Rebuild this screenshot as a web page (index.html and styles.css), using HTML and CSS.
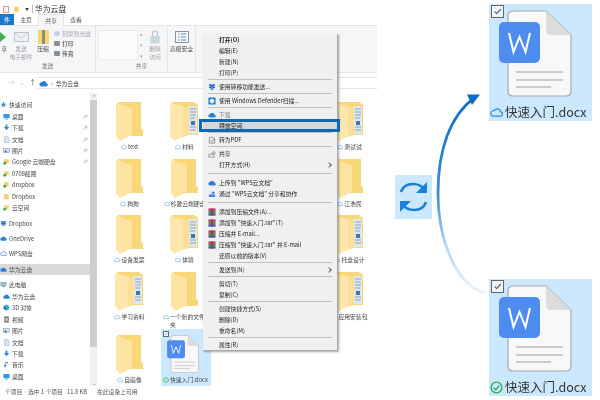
FILE: index.html
```html
<!DOCTYPE html>
<html lang="zh-CN">
<head>
    <meta charset="UTF-8">
    <title>华为云盘</title>
    <link rel="stylesheet" href="styles.css">
</head>
<body>

<!-- shared icons -->
<svg class="defs" aria-hidden="true">
    <symbol id="cloud" viewBox="0 0 14 10"><path d="M3.5 9H11a2.3 2.3 0 0 0 .4-4.6A3.6 3.6 0 0 0 4.6 3 3 3 0 0 0 3.5 9Z" fill="none" stroke="currentColor" stroke-width="1.3"/></symbol>
    <symbol id="cloud-solid" viewBox="0 0 14 10"><path d="M3.5 9.5H11a2.5 2.5 0 0 0 .4-5A3.8 3.8 0 0 0 4.4 3 3.2 3.2 0 0 0 3.5 9.5Z" fill="currentColor"/></symbol>
    <symbol id="folder" viewBox="0 0 27 39">
        <path d="M2 0H25V27L27 28V34H9Z" fill="#f8d778"/>
        <path d="M0 1L16 6V33L4 39L0 34Z" fill="#fde4a2"/>
    </symbol>
    <symbol id="folder-full" viewBox="0 0 30 39">
        <path d="M2 0H24L28 3V33H10Z" fill="#f8d778"/>
        <path d="M18 4H27V32H18Z" fill="#dfe7ec"/>
        <path d="M20 7H26M20 10H26M20 13H26M20 16H25M20 25H26M20 28H26" stroke="#8fa3b0" stroke-width="1"/>
        <path d="M21 19H25V23H21Z" fill="#3a78b0"/>
        <path d="M6 2L19 6V33L9 36Z" fill="#fbdf96"/>
        <path d="M0 1L13 5V34L4 39L0 34Z" fill="#fde7ad"/>
    </symbol>
    <symbol id="doc" viewBox="0 0 73 87">
        <path d="M14 1H47L72 25V81Q72 86 67 86H14Q9 86 9 81V6Q9 1 14 1Z" fill="#f8f8f8" stroke="#a8a8a8" stroke-width="1.2"/>
        <path d="M47 1L72 25H52Q47 25 47 20Z" fill="#dcdcdc"/>
        <path d="M17 62H64M17 70H64M17 77H52" stroke="#bcbcbc" stroke-width="1.6"/>
        <rect x="0" y="12" width="41" height="41" rx="5" fill="#4f8cf0"/>
        <path d="M10 23L14.5 42L20.5 27L26.5 42L31 23" fill="none" stroke="#fff" stroke-width="2"/>
    </symbol>
    <symbol id="check" viewBox="0 0 14 14"><circle cx="7" cy="7" r="5.8" fill="none" stroke="#2fa84f" stroke-width="1.4"/><path d="M4 7.2L6.2 9.4L10 5" fill="none" stroke="#2fa84f" stroke-width="1.4"/></symbol>
    <symbol id="tick" viewBox="0 0 13 13"><path d="M3 6.5L5.5 9L10.5 3.8" fill="none" stroke="#444" stroke-width="1.2"/></symbol>
    <symbol id="pin" viewBox="0 0 8 8"><path d="M1 7L3.5 4.5M2.5 2.5L5.5 5.5M3.5 2.5L5 1L7 3L5.5 4.5" fill="none" stroke="#888" stroke-width="1"/></symbol>
    <symbol id="star" viewBox="0 0 8 8"><path d="M4 0.5L5 3H7.6L5.5 4.7L6.3 7.4L4 5.8L1.7 7.4L2.5 4.7L0.4 3H3Z" fill="#3b8ed8"/></symbol>
    <symbol id="desk" viewBox="0 0 8 8"><rect x="0.5" y="1" width="7" height="5" rx="0.5" fill="#2f9be6"/><rect x="2.5" y="6.5" width="3" height="1" fill="#2f9be6"/></symbol>
    <symbol id="down" viewBox="0 0 8 8"><path d="M3 0.5H5V3.5H7L4 7L1 3.5H3Z" fill="#2f86d8"/></symbol>
    <symbol id="page" viewBox="0 0 8 8"><path d="M1.5 0.5H5L6.8 2.3V7.5H1.5Z" fill="#d6e4ef" stroke="#8fa9bd" stroke-width="0.5"/></symbol>
    <symbol id="pic" viewBox="0 0 8 8"><rect x="0.5" y="1.5" width="7" height="5" fill="#cfe3f2" stroke="#6d8ba3" stroke-width="0.5"/><path d="M1 6L3 3.5L5 6Z" fill="#4f7591"/></symbol>
    <symbol id="sync" viewBox="0 0 8 8"><path d="M1.5 1H3.5L4.3 1.8H6.5V6H1.5Z" fill="#f4cf6a"/><circle cx="2" cy="6" r="1.7" fill="#3fae4a"/></symbol>
    <symbol id="plain" viewBox="0 0 8 8"><path d="M1.5 1H3.5L4.3 1.8H6.5V7H1.5Z" fill="#f4cf6a"/></symbol>
    <symbol id="box" viewBox="0 0 8 8"><path d="M0.5 2L2.3 0.8L4 2L5.7 0.8L7.5 2L5.7 3.2L7.5 4.4L5.7 5.6L4 4.4L2.3 5.6L0.5 4.4L2.3 3.2ZM2.3 6L4 4.9L5.7 6L4 7.2Z" fill="#2f6fd8"/></symbol>
    <symbol id="pc" viewBox="0 0 8 8"><rect x="1" y="1.5" width="6" height="4" fill="#9ec3de" stroke="#607f96" stroke-width="0.5"/><rect x="2.5" y="6" width="3" height="1" fill="#607f96"/></symbol>
    <symbol id="cube" viewBox="0 0 8 8"><path d="M4 0.5L7.2 2.2V5.8L4 7.5L0.8 5.8V2.2Z" fill="#35b4cf"/><path d="M4 4V7.5L0.8 5.8V2.2Z" fill="#1d7f99"/></symbol>
    <symbol id="film" viewBox="0 0 8 8"><rect x="1.5" y="0.5" width="5" height="7" fill="#5d6b78"/><rect x="2.5" y="2" width="3" height="4" fill="#b9c6d0"/></symbol>
    <symbol id="note" viewBox="0 0 8 8"><path d="M3.5 1V5.6A1.3 1.1 0 1 1 2.8 4.6V1H5.6V2.2H3.5Z" fill="#2f86d8"/></symbol>
    <symbol id="rar" viewBox="0 0 9 9">
        <rect x="0.5" y="0.5" width="8" height="2.7" fill="#b23a7c"/>
        <rect x="0.5" y="3.2" width="8" height="2.7" fill="#3f9b46"/>
        <rect x="0.5" y="5.9" width="8" height="2.7" fill="#2d5fb8"/>
        <rect x="3.5" y="0.5" width="2" height="8" fill="#b6352c"/>
    </symbol>
</svg>

<div class="page">

    <div class="explorer">
        <div class="titlebar">
            <span class="qa qa-check"></span>
            <svg class="qa-folder"><use href="#plain"/></svg>
            <span class="qa-drop"></span>
            <span class="qa-sep"></span>
            <span class="title">华为云盘</span>
        </div>

        <div class="tabs">
            <span class="tab tab-file">件</span>
            <span class="tab">主页</span>
            <span class="tab tab-on">共享</span>
            <span class="tab">查看</span>
        </div>

        <div class="ribbon">
            <div class="group group-send">
                <div class="tools">
                    <div class="rbtn rbtn-cut">
                        <svg class="ic-share" viewBox="0 0 10 12"><path d="M0 4H3V1L9 6L3 11V8H0Z" fill="#3fb24a"/></svg>
                        <span>享</span>
                    </div>
                    <div class="rbtn rbtn-mail off">
                        <svg class="ic-mail" viewBox="0 0 15 10"><rect x="0.5" y="0.5" width="14" height="9" fill="#eef2f6" stroke="#bcc6cf"/><path d="M1 1L7.5 6L14 1" fill="none" stroke="#c8d0d8"/></svg>
                        <span>发送</span><span>电子邮件</span>
                    </div>
                    <div class="rbtn rbtn-zip">
                        <svg class="ic-zip" viewBox="0 0 11 14"><rect width="11" height="14" fill="#f6d66f"/><rect x="4" width="3" height="14" fill="#8d8d7a"/></svg>
                        <span>压缩</span>
                    </div>
                    <div class="rlist">
                        <span class="off"><i class="dot dot-disc"></i>刻录到光盘</span>
                        <span><i class="dot dot-print"></i>打印</span>
                        <span><i class="dot dot-print"></i>传真</span>
                    </div>
                </div>
                <div class="cap">发送</div>
            </div>
            <div class="group group-share">
                <div class="tools">
                    <div class="sharebox"></div>
                    <div class="sharearrows">
                        <span>▴</span><span>▾</span><span>▾</span>
                    </div>
                    <div class="rbtn rbtn-lock off">
                        <svg class="ic-lock" viewBox="0 0 10 14"><path d="M2.5 6V3.5a2.5 2.5 0 0 1 5 0V6" fill="none" stroke="#b9c3cc" stroke-width="1.2"/><rect x="0.5" y="6" width="9" height="7.5" fill="#c9d5df"/></svg>
                        <span>删除</span><span>访问</span>
                    </div>
                </div>
                <div class="cap cap-right">共享</div>
            </div>
            <div class="group group-sec">
                <div class="tools">
                    <div class="rbtn rbtn-sec">
                        <svg class="ic-sec" viewBox="0 0 14 12"><rect x="0.5" y="0.5" width="13" height="11" fill="#f7f8f9" stroke="#8b949c"/><path d="M3 3H4.5M3 6H4.5M3 9H4.5M6 3H11M6 6H11M6 9H11" stroke="#5a8fc0"/></svg>
                        <span>高级安全</span>
                    </div>
                </div>
            </div>
        </div>

        <div class="addr">
            <div class="nav">
                <span class="nav-off">→</span>
                <span class="nav-off nav-v">⌄</span>
                <span>↑</span>
            </div>
            <div class="addrbox">
                <svg class="ic-addr"><use href="#cloud-solid"/></svg>
                <span class="crumb">›</span>
                <span>华为云盘</span>
            </div>
        </div>

        <div class="main">
            <nav class="tree">
                <div class="row root"><svg><use href="#star"/></svg><span>快速访问</span></div>
                <div class="row"><svg><use href="#desk"/></svg><span>桌面</span><svg class="pin"><use href="#pin"/></svg></div>
                <div class="row"><svg><use href="#down"/></svg><span>下载</span><svg class="pin"><use href="#pin"/></svg></div>
                <div class="row"><svg><use href="#page"/></svg><span>文档</span><svg class="pin"><use href="#pin"/></svg></div>
                <div class="row"><svg><use href="#pic"/></svg><span>图片</span><svg class="pin"><use href="#pin"/></svg></div>
                <div class="row"><svg><use href="#sync"/></svg><span>Google 云端硬盘</span><svg class="pin"><use href="#pin"/></svg></div>
                <div class="row"><svg><use href="#sync"/></svg><span>0708截图</span></div>
                <div class="row"><svg><use href="#sync"/></svg><span>dropbox</span></div>
                <div class="row"><svg><use href="#plain"/></svg><span>Dropbox</span></div>
                <div class="row"><svg><use href="#sync"/></svg><span>云空间</span></div>
                <div class="row root"><svg><use href="#box"/></svg><span>Dropbox</span></div>
                <div class="row root"><svg class="blue"><use href="#cloud-solid"/></svg><span>OneDrive</span></div>
                <div class="row root"><svg class="blue"><use href="#cloud"/></svg><span>WPS网盘</span></div>
                <div class="row root row-on"><svg class="blue"><use href="#cloud-solid"/></svg><span>华为云盘</span></div>
                <div class="row root"><svg><use href="#pc"/></svg><span>此电脑</span></div>
                <div class="row"><svg class="blue"><use href="#cloud-solid"/></svg><span>华为云盘</span></div>
                <div class="row"><svg><use href="#cube"/></svg><span>3D 对象</span></div>
                <div class="row"><svg><use href="#film"/></svg><span>视频</span></div>
                <div class="row"><svg><use href="#pic"/></svg><span>图片</span></div>
                <div class="row"><svg><use href="#page"/></svg><span>文档</span></div>
                <div class="row"><svg><use href="#down"/></svg><span>下载</span></div>
                <div class="row"><svg><use href="#note"/></svg><span>音乐</span></div>
                <div class="row"><svg><use href="#desk"/></svg><span>桌面</span></div>
            </nav>

            <div class="scroll">
                <span class="scroll-arrow">⌃</span>
                <span class="thumb"></span>
                <span class="scroll-arrow">⌄</span>
            </div>

            <div class="files">
                <div class="item"><svg class="fd"><use href="#folder"/></svg><div class="name"><svg class="cl"><use href="#cloud"/></svg><span>text</span></div></div>
                <div class="item"><svg class="fd fd-full"><use href="#folder-full"/></svg><div class="name"><svg class="cl"><use href="#cloud"/></svg><span>材料</span></div></div>
                <div class="item col5"><svg class="fd fd-full"><use href="#folder-full"/></svg><div class="name"><svg class="cl"><use href="#cloud"/></svg><span>测试试</span></div></div>

                <div class="item"><svg class="fd"><use href="#folder"/></svg><div class="name"><svg class="cl"><use href="#cloud"/></svg><span>狗狗</span></div></div>
                <div class="item"><svg class="fd"><use href="#folder"/></svg><div class="name"><svg class="cl"><use href="#cloud"/></svg><span>谷歌云端硬盘</span></div></div>
                <div class="item col5"><svg class="fd"><use href="#folder"/></svg><div class="name"><svg class="cl"><use href="#cloud"/></svg><span>江浩民</span></div></div>

                <div class="item"><svg class="fd"><use href="#folder"/></svg><div class="name"><svg class="cl"><use href="#cloud"/></svg><span>设备发票</span></div></div>
                <div class="item"><svg class="fd fd-full"><use href="#folder-full"/></svg><div class="name"><svg class="cl"><use href="#cloud"/></svg><span>体验</span></div></div>
                <div class="item col5"><svg class="fd fd-full"><use href="#folder-full"/></svg><div class="name"><svg class="cl"><use href="#cloud"/></svg><span>托盘设计</span></div></div>

                <div class="item"><svg class="fd fd-full"><use href="#folder-full"/></svg><div class="name"><svg class="cl"><use href="#cloud"/></svg><span>学习资料</span></div></div>
                <div class="item"><svg class="fd"><use href="#folder"/></svg><div class="name name-wrap"><svg class="cl"><use href="#cloud"/></svg><span>一个新的文件夹</span></div></div>
                <div class="item col5"><svg class="fd fd-full"><use href="#folder-full"/></svg><div class="name"><svg class="cl"><use href="#cloud"/></svg><span>应用安装包</span></div></div>

                <div class="item"><svg class="fd"><use href="#folder"/></svg><div class="name"><svg class="cl"><use href="#cloud"/></svg><span>自画像</span></div></div>
                <div class="item item-sel">
                    <span class="box box-sm"><svg><use href="#tick"/></svg></span>
                    <svg class="doc-sm"><use href="#doc"/></svg>
                    <div class="name name-sel"><svg class="cl"><use href="#check"/></svg><span>快速入门.docx</span></div>
                </div>
            </div>
        </div>

        <div class="status">
            <span class="st-count">个项目</span>
            <span class="st-sel">选中 1 个项目</span>
            <span class="st-size">11.8 KB</span>
            <span class="st-avail">在此设备上可用</span>
        </div>

        <!-- context menu -->
        <div class="menu">
            <div class="mi mi-bold"><span>打开(O)</span></div>
            <div class="mi"><span>编辑(E)</span></div>
            <div class="mi"><span>新建(N)</span></div>
            <div class="mi"><span>打印(P)</span></div>
            <hr>
            <div class="mi"><svg><use href="#box"/></svg><span>使用转移功能发送...</span></div>
            <hr>
            <div class="mi"><svg class="ic-def" viewBox="0 0 9 9"><rect x="0.5" y="0.5" width="8" height="8" rx="1" fill="#1f7fd0"/><path d="M4.5 2L7 3V5Q7 6.5 4.5 7.5Q2 6.5 2 5V3Z" fill="#dcefff"/></svg><span>使用 Windows Defender扫描...</span></div>
            <hr>
            <div class="mi mi-off"><svg class="blue"><use href="#cloud-solid"/></svg><span>下载</span></div>
            <div class="mi mi-hot"><span>释放空间</span></div>
            <hr>
            <div class="mi"><svg viewBox="0 0 9 9"><path d="M1.5 1.5H5.5L7.5 3.5V8H1.5Z" fill="none" stroke="#777" stroke-width="0.8"/><path d="M3 5L4.3 6.3L7.5 2.5" fill="none" stroke="#555" stroke-width="0.8"/></svg><span>转为PDF</span></div>
            <hr>
            <div class="mi"><svg viewBox="0 0 9 9"><path d="M1 4V8H7V6M3 5.5Q3.5 3 6 3V1.5L8.5 3.5L6 5.5V4.2Q4.2 4.2 3 5.5Z" fill="none" stroke="#666" stroke-width="0.7"/></svg><span>共享</span></div>
            <div class="mi"><span>打开方式(H)</span><b class="more"></b></div>
            <hr class="hr-wide">
            <div class="mi"><svg class="blue"><use href="#cloud-solid"/></svg><span>上传到 "WPS云文档"</span></div>
            <div class="mi"><svg viewBox="0 0 9 9"><path d="M1 8H8V5H1ZM3 4Q3.5 2.5 5.5 2.5V1L8 3L5.5 5V3.8Q4 3.8 3 4Z" fill="#3d86dc"/></svg><span>通过 "WPS云文档" 分享和协作</span></div>
            <hr class="hr-wide">
            <div class="mi"><svg><use href="#rar"/></svg><span>添加到压缩文件(A)...</span></div>
            <div class="mi"><svg><use href="#rar"/></svg><span>添加到 "快速入门.rar"(T)</span></div>
            <div class="mi"><svg><use href="#rar"/></svg><span>压缩并 E-mail...</span></div>
            <div class="mi"><svg><use href="#rar"/></svg><span>压缩到 "快速入门.rar" 并 E-mail</span></div>
            <div class="mi"><span>还原以前的版本(V)</span></div>
            <hr>
            <div class="mi"><span>发送到(N)</span><b class="more"></b></div>
            <hr>
            <div class="mi"><span>剪切(T)</span></div>
            <div class="mi"><span>复制(C)</span></div>
            <hr>
            <div class="mi"><span>创建快捷方式(S)</span></div>
            <div class="mi"><span>删除(D)</span></div>
            <div class="mi"><span>重命名(M)</span></div>
            <hr>
            <div class="mi"><span>属性(R)</span></div>
        </div>
    </div>

    <div class="right">
        <div class="refresh">
            <svg viewBox="0 0 37 44">
                <path d="M6 17C8 11 13 9 18 9C23 9 27 11 30 15" fill="none" stroke="#1a80dc" stroke-width="2.6"/>
                <path d="M32 7V18H21Z" fill="#1a80dc"/>
                <path d="M31 27C29 33 24 35 19 35C14 35 10 33 7 29" fill="none" stroke="#1a80dc" stroke-width="2.6"/>
                <path d="M5 37V26H16Z" fill="#1a80dc"/>
            </svg>
        </div>
        <div class="tiles">
            <div class="tile">
                <span class="box"><svg><use href="#tick"/></svg></span>
                <svg class="doc"><use href="#doc"/></svg>
                <div class="tile-name"><svg class="tile-cloud"><use href="#cloud"/></svg><span>快速入门.docx</span></div>
            </div>
            <div class="tile">
                <span class="box"><svg><use href="#tick"/></svg></span>
                <svg class="doc"><use href="#doc"/></svg>
                <div class="tile-name"><svg class="tile-ok"><use href="#check"/></svg><span>快速入门.docx</span></div>
            </div>
        </div>
    </div>

    <!-- curved arrow between the two states -->
    <svg class="curve" viewBox="0 0 600 400">
        <defs>
            <linearGradient id="fade" gradientUnits="userSpaceOnUse" x1="0" y1="95" x2="0" y2="295">
                <stop offset="0" stop-color="#0a6cc2"/>
                <stop offset="0.5" stop-color="#3c8fd8"/>
                <stop offset="0.75" stop-color="#b5d5f1"/>
                <stop offset="1" stop-color="#edf5fc"/>
            </linearGradient>
        </defs>
        <path d="M485 293C456 285 438 240 438 193C438 150 450 116 474 98" fill="none" stroke="url(#fade)" stroke-width="2.8"/>
        <path d="M467 94.500L480 94.500L472 105Z" fill="#0a6cc2"/>
    </svg>
</div>

</body>
</html>
```

FILE: styles.css
```css
* {
    margin: 0;
    padding: 0;
    box-sizing: border-box;
}

body {
    background: #fff;
    font-family: "Noto Sans CJK SC", "Liberation Sans", sans-serif;
    font-size: 5.8px;
    color: #333;
    overflow: hidden;
}

.defs {
    display: none;
}

.page {
    position: relative;
    display: flex;
    width: 600px;
    height: 400px;
    overflow: hidden;
    filter: blur(0.45px);
}

/* window */
.explorer {
    position: relative;
    display: flex;
    flex-direction: column;
    width: 377px;
    height: 400px;
}

.titlebar {
    display: flex;
    align-items: center;
    height: 14px;
    padding: 4px 0 0 3px;
}

.qa-check {
    width: 6px;
    height: 7px;
    border: 1px solid #d99;
    background: #f6f6f6;
}

.qa-folder {
    width: 7px;
    height: 8px;
    margin-left: 4px;
}

.qa-drop {
    width: 0;
    height: 0;
    margin-left: 5px;
    border: 2px solid transparent;
    border-top: 3px solid #444;
    border-bottom: 0;
}

.qa-sep {
    width: 1px;
    height: 8px;
    margin-left: 3px;
    background: #bbb;
}

.title {
    margin-left: 2px;
    font-size: 7.8px;
    line-height: 10px;
}

.tabs {
    display: flex;
    height: 12px;
    border-bottom: 1px solid #e4e4e4;
}

.tab {
    width: 24px;
    height: 12px;
    line-height: 11px;
    text-align: center;
    color: #555;
}

.tab-file {
    width: 14px;
    height: 11px;
    background: #1979ca;
    color: #fff;
}

.tab-on {
    width: 26px;
    background: #f5f6f7;
    border: 1px solid #e4e4e4;
    border-bottom: 0;
}

.ribbon {
    display: flex;
    height: 47px;
    background: #f5f6f7;
    border-bottom: 1px solid #e8e8e8;
}

.group {
    display: flex;
    flex-direction: column;
    border-right: 1px solid #e3e4e6;
}

.group-send {
    width: 96px;
}

.group-share {
    width: 72px;
}

.group-sec {
    width: 28px;
}

.tools {
    display: flex;
    flex: 1;
    min-height: 0;
    padding-top: 4px;
}

.cap {
    height: 10px;
    padding-bottom: 2px;
    line-height: 8px;
    text-align: center;
    color: #777;
}

.cap-right {
    padding-left: 20px;
}

.rbtn {
    display: flex;
    flex-direction: column;
    align-items: center;
    line-height: 8px;
    white-space: nowrap;
    color: #444;
}

.rbtn svg {
    flex: none;
    height: 14px;
    margin-bottom: 1px;
}

.off,
.rbtn.off {
    color: #a0a4a8;
}

.rbtn-cut {
    align-items: flex-end;
    width: 7px;
    overflow: hidden;
}

.ic-share {
    width: 10px;
}

.rbtn-mail {
    width: 22px;
    margin-left: 3px;
}

.ic-mail {
    width: 15px;
}

.rbtn-zip {
    width: 12px;
    margin-left: 5px;
}

.ic-zip {
    width: 11px;
}

.rlist {
    display: flex;
    flex-direction: column;
    gap: 2px;
    margin-left: 5px;
    line-height: 8px;
    white-space: nowrap;
}

.dot {
    display: inline-block;
    width: 6px;
    height: 5px;
    margin-right: 2px;
    background: #8a8f94;
    border-radius: 1px;
}

.dot-disc {
    background: #c2d3e2;
    border-radius: 50%;
}

.sharebox {
    width: 40px;
    height: 30px;
    margin-left: 2px;
    background: #fbfcfd;
    border: 1px solid #eaecee;
}

.sharearrows {
    display: flex;
    flex-direction: column;
    justify-content: space-between;
    height: 30px;
    margin-left: 2px;
    font-size: 5px;
    line-height: 8px;
    color: #aaa;
}

.rbtn-lock {
    width: 14px;
    margin-left: 5px;
}

.ic-lock {
    width: 10px;
}

.rbtn-sec {
    width: 28px;
}

.ic-sec {
    width: 14px;
}

.addr {
    display: flex;
    height: 20px;
    padding-top: 4px;
}

.nav {
    display: flex;
    gap: 4px;
    width: 37px;
    padding-left: 8px;
    font-size: 7px;
    line-height: 10px;
    color: #555;
}

.nav-off {
    color: #c4c4c4;
}

.addrbox {
    display: flex;
    flex: 1;
    align-items: center;
    gap: 3px;
    height: 12px;
    padding-left: 2px;
    border-top: 1px solid #e6e6e6;
    border-bottom: 1px solid #e6e6e6;
}

.ic-addr {
    width: 9px;
    height: 7px;
    color: #2a7fd8;
}

.crumb {
    color: #666;
}

.main {
    display: flex;
    height: 293px;
}

/* folder tree */
.tree {
    width: 93px;
    padding-top: 2px;
    overflow: hidden;
}

.row {
    display: flex;
    align-items: center;
    gap: 2px;
    height: 11.45px;
    padding-left: 3px;
    white-space: nowrap;
    color: #444;
}

.row svg {
    flex: none;
    width: 7px;
    height: 7px;
}

.root {
    margin-top: 4px;
    padding-left: 0;
}

.row-on {
    background: #d9d9d9;
}

.blue {
    color: #2a7fd8;
}

.row .pin {
    width: 5px;
    height: 5px;
    margin-left: auto;
    margin-right: 2px;
}

.scroll {
    display: flex;
    flex-direction: column;
    align-items: center;
    justify-content: space-between;
    width: 7px;
    background: #f0f0f0;
    font-size: 5px;
    line-height: 7px;
    color: #666;
}

.thumb {
    flex: 1;
    align-self: stretch;
    margin-bottom: 32px;
    background: #cdcdcd;
}

/* file grid */
.files {
    display: grid;
    grid-template-columns: repeat(5, 55px);
    grid-auto-rows: minmax(56.7px, auto);
    align-content: start;
    padding: 3px 0 0 5px;
}

.item {
    display: flex;
    flex-direction: column;
    align-items: center;
    padding-top: 6px;
    white-space: nowrap;
}

.col5 {
    grid-column: 5;
}

.item:nth-child(3n+1) {
    grid-column: 1;
}

.fd {
    flex: none;
    width: 27px;
    height: 39px;
}

.fd-full {
    width: 30px;
}

.name {
    display: flex;
    align-items: flex-start;
    gap: 1px;
    margin-top: 2px;
    line-height: 8px;
    color: #444;
}

.cl {
    flex: none;
    width: 6px;
    height: 6px;
    margin-top: 1px;
    color: #4a9fd8;
}

.name-wrap span {
    width: 36px;
    white-space: normal;
}

.item-sel {
    position: relative;
    align-items: flex-start;
    width: 50px;
    height: 57px;
    margin-left: 4px;
    padding: 6px 0 0 6px;
    background: #cce8ff;
}

.doc-sm {
    flex: none;
    width: 32px;
    height: 38px;
}

.name-sel {
    margin: 3px 0 0 -4px;
}

.box {
    position: absolute;
    left: 2px;
    top: 1px;
    width: 13px;
    height: 13px;
    background: #eef6fc;
    border: 1px solid #666;
}

.box svg {
    display: block;
    width: 100%;
    height: 100%;
}

.box-sm {
    left: 2px;
    top: 2px;
    width: 6px;
    height: 6px;
    border-width: 0.5px;
}

.status {
    position: relative;
    height: 11px;
    line-height: 11px;
    color: #555;
}

.status span {
    position: absolute;
    top: 0;
    white-space: nowrap;
}

.st-count { left: 5px; }
.st-sel { left: 28px; }
.st-size { left: 67px; }
.st-avail { left: 97px; }

/* context menu */
.menu {
    position: absolute;
    left: 203px;
    top: 34px;
    width: 135px;
    height: 317px;
    background: #f0f0f0;
    border-right: 1px solid #a8a8a8;
    border-bottom: 1px solid #a8a8a8;
    box-shadow: 1px 1px 2px rgba(0, 0, 0, 0.35);
    color: #222;
}

.mi {
    position: relative;
    display: flex;
    align-items: center;
    height: 11px;
    padding-left: 16px;
    line-height: 11px;
    white-space: nowrap;
}

.mi svg {
    position: absolute;
    left: 5px;
    top: 1.5px;
    width: 8px;
    height: 8px;
}

.mi-bold {
    font-weight: 700;
}

.mi-off {
    color: #7c7c7c;
}

.mi-hot {
    background: #d6d6d6;
}

.mi-hot::after {
    content: "";
    position: absolute;
    left: -4px;
    right: -3px;
    top: -1px;
    bottom: -1px;
    border: 3px solid #0a68b4;
}

.more {
    position: absolute;
    right: 6px;
    top: 3.5px;
    width: 4px;
    height: 4px;
    border-top: 1px solid #666;
    border-right: 1px solid #666;
    transform: rotate(45deg);
}

.menu hr {
    height: 1px;
    margin: 1px 5px 1px 5px;
    border: 0;
    background: #c0c0c0;
}

.menu .hr-wide {
    margin-top: 3px;
    margin-bottom: 3px;
}

/* right side */
.right {
    display: flex;
    flex: 1;
    padding-left: 18px;
}

.refresh {
    align-self: center;
    width: 37px;
    height: 44px;
    margin-bottom: 6px;
    background: #cce8ff;
}

.refresh svg {
    display: block;
    width: 37px;
    height: 44px;
}

.tiles {
    display: flex;
    flex-direction: column;
    justify-content: space-between;
    margin-left: 57px;
    padding: 4px 0;
}

.tile {
    position: relative;
    width: 103px;
    height: 117px;
    padding: 6px 0 0 10px;
    background: #cce8ff;
}

.doc {
    display: block;
    width: 73px;
    height: 87px;
}

.tile-name {
    display: flex;
    align-items: center;
    gap: 2px;
    height: 16px;
    margin: 7px 0 0 -9px;
    font-size: 12.5px;
    line-height: 16px;
    white-space: nowrap;
    color: #333;
}

.tile-cloud,
.tile-ok {
    flex: none;
    width: 13px;
    height: 13px;
}

.tile-cloud {
    color: #2a8fdc;
}

.curve {
    position: absolute;
    left: 0;
    top: 0;
    width: 600px;
    height: 400px;
    pointer-events: none;
}
```
